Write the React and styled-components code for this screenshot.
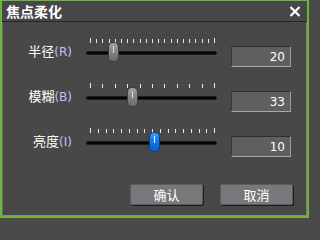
import React from "react";
import styled, { createGlobalStyle } from "styled-components";

const GlobalStyle = createGlobalStyle`
  html, body {
    margin: 0;
    padding: 0;
    background: #4a4a4a;
  }
  * { box-sizing: border-box; }
`;

const Window = styled.div`
  width: 309px;
  height: 218px;
  border: 2px solid #69b83a;
  border-top-width: 1px;
  background: #4a4a4a;
  display: flex;
  flex-direction: column;
  font-family: "Noto Sans CJK SC", "Noto Sans", sans-serif;
`;

const TitleBar = styled.div`
  height: 21px;
  display: flex;
  align-items: center;
  justify-content: space-between;
  padding: 0 6px 0 4px;
  background: #474747;
  border-bottom: 1px solid #262626;
`;

const Title = styled.div`
  color: #ffffff;
  font-size: 14px;
  font-weight: 700;
  line-height: 14px;
`;

const CloseButton = styled.div`
  width: 12px;
  height: 11px;
  display: flex;
  cursor: pointer;
`;

const Body = styled.div`
  flex: 1;
  display: flex;
  flex-direction: column;
  padding-top: 16px;
  border-left: 1px solid #6a6a6a;
  border-right: 1px solid #7a7a7a;
  border-bottom: 1px solid #8a8a8a;
  background: #484848;
`;

const Row = styled.div`
  height: 45px;
  display: flex;
  align-items: flex-start;
`;

const Label = styled.div`
  width: 69px;
  margin-right: 14px;
  margin-top: 6px;
  text-align: right;
  color: #ffffff;
  font-size: 13px;
  line-height: 14px;
  white-space: nowrap;
  span {
    color: #b6c6f6;
    font-family: "DejaVu Sans", sans-serif;
    font-size: 12px;
  }
`;

const Slider = styled.div`
  position: relative;
  width: 131px;
  height: 26px;
  margin-right: 14px;
`;

const Ticks = styled.svg`
  display: block;
  position: absolute;
  left: 0;
  top: 0;
`;

const Track = styled.div`
  position: absolute;
  left: 0;
  right: 0;
  top: 13px;
  height: 4px;
  background: #050505;
  border: 1px solid #1c1c1c;
  border-radius: 2px;
`;

const Thumb = styled.div`
  position: absolute;
  top: 4px;
  width: 11px;
  height: 20px;
  border-radius: 5px 5px 4px 4px;
  border: 1px solid ${(p) => (p.$active ? "#0a3f88" : "#3c3c3c")};
  background: ${(p) =>
    p.$active
      ? "linear-gradient(180deg, #3d9bff 0%, #1676e8 45%, #0b5bc6 100%)"
      : "linear-gradient(180deg, #a2a2a2 0%, #858585 45%, #6a6a6a 100%)"};
  &::after {
    content: "";
    position: absolute;
    left: 4px;
    top: 3px;
    width: 1px;
    height: 7px;
    background: ${(p) => (p.$active ? "#e8f3ff" : "#dcdcdc")};
  }
`;

const ValueBox = styled.div`
  width: 60px;
  height: 21px;
  margin-top: 8px;
  padding-right: 5px;
  display: flex;
  align-items: center;
  justify-content: flex-end;
  background: #5f5f5f;
  border-top: 1px solid #2e2e2e;
  border-left: 1px solid #3a3a3a;
  border-right: 1px solid #9a9a9a;
  border-bottom: 1px solid #a8a8a8;
  color: #ffffff;
  font-family: "DejaVu Sans", sans-serif;
  font-size: 12px;
`;

const Footer = styled.div`
  display: flex;
  justify-content: flex-end;
  gap: 17px;
  margin-top: 11px;
  padding-right: 13px;
`;

const Button = styled.div`
  width: 73px;
  height: 21px;
  display: flex;
  align-items: center;
  justify-content: center;
  background: #78787c;
  border: 1px solid #5c5c5e;
  border-radius: 2px;
  box-shadow: 1px 1px 0 #1c1c1c;
  color: #ffffff;
  font-size: 13px;
  cursor: pointer;
`;

const rows = [
  { label: "半径", key: "(R)", value: 20, pos: 0.19, ticks: 21 },
  { label: "模糊", key: "(B)", value: 33, pos: 0.34, ticks: 11 },
  { label: "亮度", key: "(I)", value: 10, pos: 0.52, ticks: 17, active: true },
];

function TickMarks({ count }) {
  const marks = [];
  for (let i = 0; i < count; i++) {
    const x = 4 + (124 * i) / (count - 1);
    const long = i === 0 || i === count - 1;
    marks.push(
      <rect key={i} x={Math.round(x)} y={long ? 0 : 1} width="1" height={long ? 5 : 4} fill="#e6e6e6" />
    );
  }
  return (
    <Ticks width="131" height="6">
      {marks}
    </Ticks>
  );
}

export default function App() {
  return (
    <Window>
      <GlobalStyle />
      <TitleBar>
        <Title>焦点柔化</Title>
        <CloseButton>
          <svg width="12" height="11" viewBox="0 0 12 11">
            <path d="M1.5 1 L10.5 10 M10.5 1 L1.5 10" stroke="#ffffff" strokeWidth="2.2" />
          </svg>
        </CloseButton>
      </TitleBar>
      <Body>
        {rows.map((r) => (
          <Row key={r.label}>
            <Label>
              {r.label}
              <span>{r.key}</span>
            </Label>
            <Slider>
              <TickMarks count={r.ticks} />
              <Track />
              <Thumb $active={r.active} style={{ left: Math.round(4 + r.pos * 124 - 5.5) }} />
            </Slider>
            <ValueBox>{r.value}</ValueBox>
          </Row>
        ))}
        <Footer>
          <Button>确认</Button>
          <Button>取消</Button>
        </Footer>
      </Body>
    </Window>
  );
}
